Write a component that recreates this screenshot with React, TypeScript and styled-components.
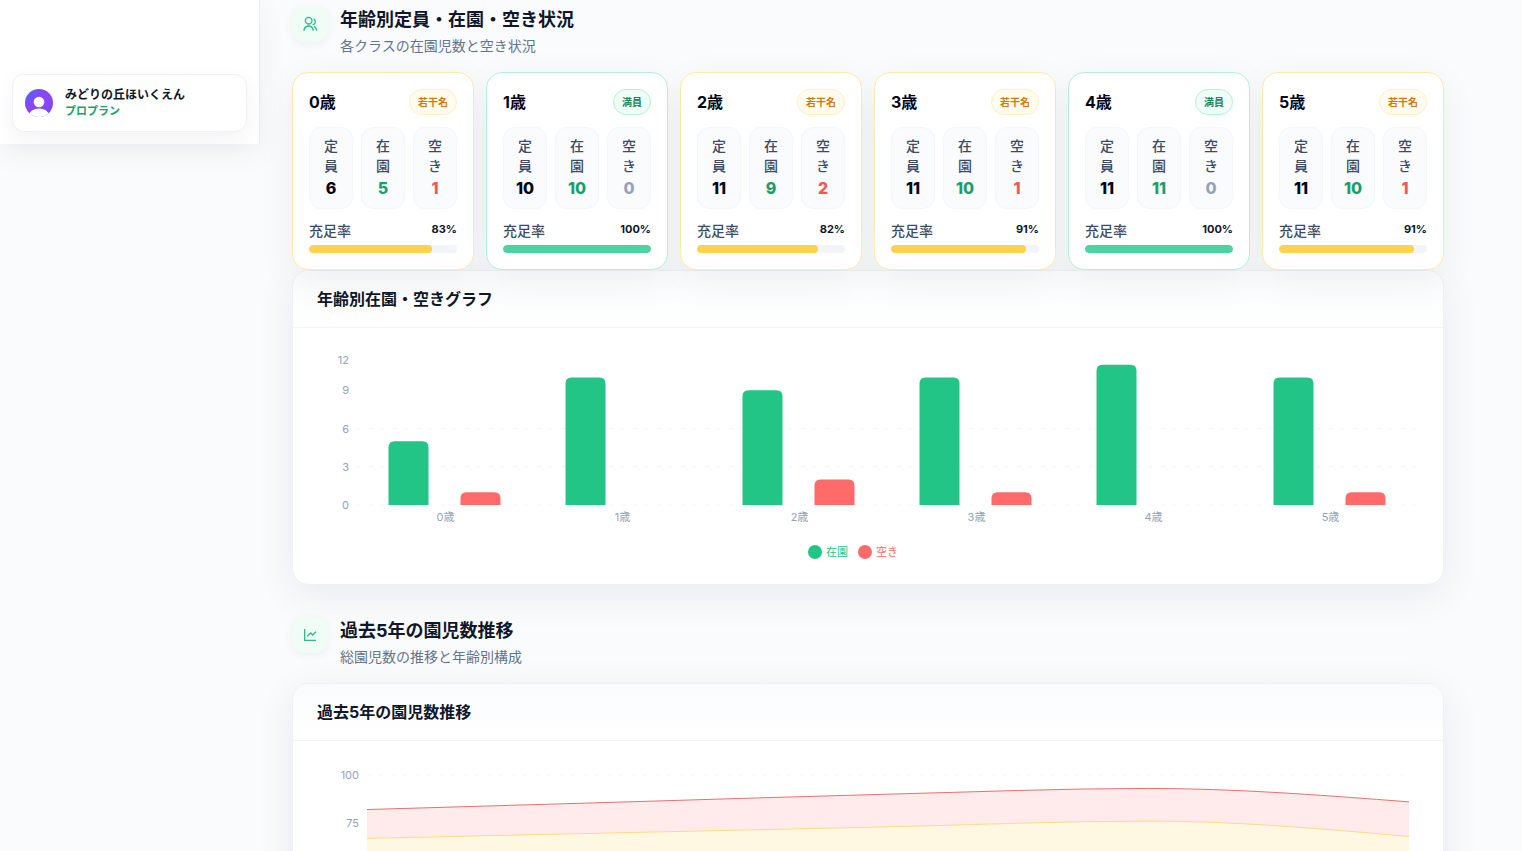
import React, { useLayoutEffect, useRef, useState } from "react";
import styled, { createGlobalStyle } from "styled-components";
import { RiGroupLine, RiLineChartLine } from "react-icons/ri";

const GlobalStyle = createGlobalStyle`
  * { box-sizing: border-box; }
  body {
    margin: 0;
    background: #f9fbfd;
    color: #0f172a;
    font-family: Inter, "Noto Sans CJK JP", sans-serif;
    font-size: 14px;
    line-height: 20px;
  }
  h2, h3, p, dl, dd, ul { margin: 0; padding: 0; }
`;

const Shell = styled.div`
  display: flex;
  align-items: flex-start;
  height: 100vh;
  overflow: hidden;
`;

const Sidebar = styled.aside`
  flex: 0 0 260px;
  padding: 74px 12px 12px;
  background: #ffffff;
  border-right: 1px solid #e9edf2;
  box-shadow: 0 8px 30px rgba(15, 23, 42, 0.05);
`;

const Account = styled.div`
  display: flex;
  align-items: center;
  gap: 12px;
  height: 58px;
  padding: 0 12px;
  background: #ffffff;
  border: 1px solid #eef1f5;
  border-radius: 12px;
  box-shadow: 0 8px 24px rgba(15, 23, 42, 0.05);
`;

const AccountName = styled.p`
  font-size: 12px;
  line-height: 16px;
  font-weight: 600;
`;

const AccountPlan = styled.p`
  font-size: 11px;
  line-height: 16px;
  font-weight: 700;
  color: #1a9f6c;
`;

const Main = styled.main`
  flex: 1;
  min-width: 0;
  padding: 6px 32px 32px;
`;

const Content = styled.div`
  display: flex;
  flex-direction: column;
  gap: 32px;
  max-width: 1152px;
`;

const SectionHeader = styled.header`
  display: flex;
  align-items: flex-start;
  gap: 12px;
  margin-bottom: 16px;
`;

const IconTile = styled.span`
  display: grid;
  place-items: center;
  width: 36px;
  height: 36px;
  border-radius: 12px;
  background: #effdf6;
  color: #2fbb84;
  font-size: 16px;
  box-shadow: 0 2px 10px rgba(15, 23, 42, 0.05);
`;

const SectionTitle = styled.h2`
  font-size: 18px;
  line-height: 27px;
  font-weight: 700;
`;

const SectionNote = styled.p`
  margin-top: 3px;
  color: #64748b;
`;

const CardGrid = styled.div`
  position: relative;
  isolation: isolate;
  display: grid;
  grid-template-columns: repeat(6, minmax(0, 1fr));
  gap: 12px;
`;

/* The shadow sits on a layer below all cards, so it never tints a neighbour. */
const AgeCard = styled.article<{ $full: boolean }>`
  position: relative;
  padding: 16px;
  background: #ffffff;
  border: 1px solid ${(p) => (p.$full ? "#b5f0d6" : "#fdeaa8")};
  border-radius: 16px;

  &::before {
    content: "";
    position: absolute;
    inset: 0;
    z-index: -1;
    border-radius: 16px;
    box-shadow: 0 10px 40px rgba(15, 23, 42, 0.06);
  }
`;

const AgeTop = styled.div`
  display: flex;
  align-items: center;
  justify-content: space-between;
  margin-bottom: 12px;
`;

const AgeName = styled.h3`
  font-size: 16px;
  line-height: 24px;
  font-weight: 700;
  color: #020617;
`;

const Badge = styled.span<{ $full: boolean }>`
  padding: 4px 8px;
  border: 1px solid ${(p) => (p.$full ? "#b5f0d6" : "#fdf0c4")};
  border-radius: 13px;
  background: ${(p) => (p.$full ? "#effdf6" : "#fffcef")};
  color: ${(p) => (p.$full ? "#17855c" : "#d17a10")};
  font-size: 10px;
  line-height: 16px;
  font-weight: 700;
`;

const Stats = styled.dl`
  display: grid;
  grid-template-columns: repeat(3, minmax(0, 1fr));
  gap: 8px;
  margin-bottom: 12px;
`;

const Stat = styled.div`
  padding: 8px;
  background: #fafbfd;
  border: 1px solid #f3f5f9;
  border-radius: 12px;
  text-align: center;
`;

const StatLabel = styled.dt`
  font-weight: 500;
  color: #3d4a5f;
`;

const StatValue = styled.dd<{ $color: string }>`
  font-size: 16px;
  line-height: 24px;
  font-weight: 800;
  color: ${(p) => p.$color};
`;

const RateRow = styled.div`
  display: flex;
  align-items: flex-start;
  justify-content: space-between;
  margin-bottom: 4px;
`;

const RateLabel = styled.span`
  font-weight: 500;
  color: #3d4a5f;
`;

const RateValue = styled.span`
  font-size: 11px;
  line-height: 16px;
  font-weight: 700;
`;

const Track = styled.div`
  height: 8px;
  border-radius: 4px;
  background: #f2f4f7;
  overflow: hidden;
`;

const Fill = styled.div<{ $full: boolean }>`
  height: 100%;
  border-radius: 4px;
  background: ${(p) => (p.$full ? "#4bd4a2" : "#fcd34d")};
`;

const Panel = styled.section`
  background: #ffffff;
  border: 1px solid #eef1f4;
  border-radius: 16px;
  box-shadow: 0 10px 40px rgba(15, 23, 42, 0.07);
`;

const PanelHead = styled.div`
  padding: 16px 24px;
  border-bottom: 1px solid #f3f5f8;
  border-radius: 16px 16px 0 0;
  background: linear-gradient(#fafbfd, #ffffff);
`;

const PanelTitle = styled.h3`
  font-size: 16px;
  line-height: 24px;
  font-weight: 700;
`;

const PanelBody = styled.div`
  padding: 24px;
`;

const Chart = styled.svg`
  display: block;
  width: 100%;
  overflow: visible;

  text {
    font-size: 11px;
    fill: #94a3b8;
  }
`;

const Legend = styled.ul`
  display: flex;
  justify-content: center;
  gap: 10px;
  padding-right: 30px;
  list-style: none;
`;

const LegendItem = styled.li<{ $color: string }>`
  display: flex;
  align-items: center;
  gap: 4px;
  font-size: 11px;
  line-height: 16px;
  color: ${(p) => p.$color};

  &::before {
    content: "";
    width: 14px;
    height: 14px;
    border-radius: 50%;
    background: ${(p) => p.$color};
  }
`;

const GREEN = "#22c585";
const RED = "#ff6b6b";

const ages = [
  { name: "0歳", capacity: 6, enrolled: 5, open: 1, rate: 83 },
  { name: "1歳", capacity: 10, enrolled: 10, open: 0, rate: 100 },
  { name: "2歳", capacity: 11, enrolled: 9, open: 2, rate: 82 },
  { name: "3歳", capacity: 11, enrolled: 10, open: 1, rate: 91 },
  { name: "4歳", capacity: 11, enrolled: 11, open: 0, rate: 100 },
  { name: "5歳", capacity: 11, enrolled: 10, open: 1, rate: 91 },
];

const layers = [
  { values: [82, 86, 90, 93, 86], stroke: "#e87070", fill: "#ffebeb" },
  { values: [67, 70, 73, 76, 68], stroke: "#fbdc84", fill: "#fef8e3" },
];

function useWidth<T extends Element>() {
  const ref = useRef<T>(null);
  const [width, setWidth] = useState(1102);
  useLayoutEffect(() => {
    const node = ref.current;
    if (!node) return;
    const read = () => setWidth(Math.round(node.getBoundingClientRect().width));
    read();
    const observer = new ResizeObserver(read);
    observer.observe(node);
    return () => observer.disconnect();
  }, []);
  return [ref, width] as const;
}

/** Bar with only its top corners rounded. */
function barPath(x: number, bottom: number, w: number, h: number, r = 6) {
  const top = bottom - h;
  return `M${x},${bottom}V${top + r}Q${x},${top} ${x + r},${top}H${x + w - r}Q${x + w},${top} ${x + w},${top + r}V${bottom}Z`;
}

/** Monotone cubic curve through evenly spaced points. */
function curvePath(points: [number, number][]) {
  const step = points[1][0] - points[0][0];
  const slopes = points.slice(1).map((p, i) => (p[1] - points[i][1]) / step);
  const inner = slopes.slice(1).map((s, i) => {
    const prev = slopes[i];
    if (prev * s <= 0) return 0;
    return Math.sign(s) * Math.min(Math.abs(prev), Math.abs(s), Math.abs(prev + s) / 4) * 2;
  });
  const first = (3 * slopes[0] - inner[0]) / 2;
  const last = (3 * slopes[slopes.length - 1] - inner[inner.length - 1]) / 2;
  const tangents = [first, ...inner, last];
  return points
    .map(([x, y], i) => {
      if (i === 0) return `M${x},${y}`;
      const [px, py] = points[i - 1];
      const third = step / 3;
      return `C${px + third},${py + tangents[i - 1] * third} ${x - third},${y - tangents[i] * third} ${x},${y}`;
    })
    .join("");
}

function Avatar() {
  return (
    <svg width="28" height="28" viewBox="0 0 28 28" aria-hidden="true">
      <defs>
        <linearGradient id="avatar" x1="0" y1="0" x2="1" y2="1">
          <stop offset="0" stopColor="#3f6bff" />
          <stop offset="0.4" stopColor="#8b45f7" />
          <stop offset="0.65" stopColor="#8b45f7" />
          <stop offset="1" stopColor="#5b50fb" />
        </linearGradient>
        <clipPath id="avatarClip">
          <circle cx="14" cy="14" r="14" />
        </clipPath>
      </defs>
      <g clipPath="url(#avatarClip)">
        <rect width="28" height="28" fill="url(#avatar)" />
        <circle cx="14" cy="13" r="5.3" fill="#fff" />
        <ellipse cx="14" cy="26.5" rx="10" ry="7" fill="#fff" />
      </g>
    </svg>
  );
}

function AgeSummary({ age }: { age: (typeof ages)[number] }) {
  const full = age.open === 0;
  return (
    <AgeCard $full={full}>
      <AgeTop>
        <AgeName>{age.name}</AgeName>
        <Badge $full={full}>{full ? "満員" : "若干名"}</Badge>
      </AgeTop>
      <Stats>
        <Stat>
          <StatLabel>定員</StatLabel>
          <StatValue $color="#020617">{age.capacity}</StatValue>
        </Stat>
        <Stat>
          <StatLabel>在園</StatLabel>
          <StatValue $color="#1a9f6c">{age.enrolled}</StatValue>
        </Stat>
        <Stat>
          <StatLabel>空き</StatLabel>
          <StatValue $color={full ? "#94a3b8" : "#f55656"}>{age.open}</StatValue>
        </Stat>
      </Stats>
      <RateRow>
        <RateLabel>充足率</RateLabel>
        <RateValue>{age.rate}%</RateValue>
      </RateRow>
      <Track>
        <Fill $full={full} style={{ width: `${age.rate}%` }} />
      </Track>
    </AgeCard>
  );
}

function BarChart() {
  const [ref, width] = useWidth<SVGSVGElement>();
  const left = 40;
  const base = 153;
  const unit = 12.75;
  const band = (width - left) / ages.length;
  return (
    <Chart ref={ref} height={192} role="img" aria-label="年齢別在園・空きグラフ">
      {[0, 3, 6].map((v) => (
        <line key={v} x1={left} x2={width} y1={base - v * unit} y2={base - v * unit} stroke="#f1f5f9" strokeDasharray="4 8" />
      ))}
      {[0, 3, 6, 9, 12].map((v) => (
        <text key={v} x={32} y={Math.max(base - v * unit, 8) + 4} textAnchor="end">
          {v}
        </text>
      ))}
      {ages.map((age, i) => {
        const center = left + band * (i + 0.5);
        return (
          <g key={age.name}>
            <path d={barPath(center - 57, base, 40, age.enrolled * unit)} fill={GREEN} />
            {age.open > 0 && <path d={barPath(center + 15, base, 40, age.open * unit)} fill={RED} />}
            <text x={center} y={169} textAnchor="middle">
              {age.name}
            </text>
          </g>
        );
      })}
    </Chart>
  );
}

function AreaChart() {
  const [ref, width] = useWidth<SVGSVGElement>();
  const left = 50;
  const right = width - 10;
  const y = (v: number) => 10 + (100 - v) * 1.92;
  return (
    <Chart ref={ref} height={240} role="img" aria-label="過去5年の園児数推移">
      <line x1={left} x2={right} y1={y(100)} y2={y(100)} stroke="#f1f5f9" strokeDasharray="4 8" />
      {[100, 75].map((v) => (
        <text key={v} x={42} y={y(v) + 4} textAnchor="end">
          {v}
        </text>
      ))}
      {layers.map((layer) => {
        const line = curvePath(
          layer.values.map((v, i): [number, number] => [left + ((right - left) * i) / 4, y(v)]),
        );
        return (
          <g key={layer.stroke}>
            <path d={`${line}V${y(0)}H${left}Z`} fill={layer.fill} />
            <path d={line} fill="none" stroke={layer.stroke} />
          </g>
        );
      })}
    </Chart>
  );
}

export default function App() {
  return (
    <>
      <GlobalStyle />
      <Shell>
        <Sidebar>
          <Account>
            <Avatar />
            <div>
              <AccountName>みどりの丘ほいくえん</AccountName>
              <AccountPlan>プロプラン</AccountPlan>
            </div>
          </Account>
        </Sidebar>
        <Main>
          <Content>
            <section>
              <SectionHeader>
                <IconTile>
                  <RiGroupLine />
                </IconTile>
                <div>
                  <SectionTitle>年齢別定員・在園・空き状況</SectionTitle>
                  <SectionNote>各クラスの在園児数と空き状況</SectionNote>
                </div>
              </SectionHeader>
              <CardGrid>
                {ages.map((age) => (
                  <AgeSummary key={age.name} age={age} />
                ))}
              </CardGrid>
              <Panel>
                <PanelHead>
                  <PanelTitle>年齢別在園・空きグラフ</PanelTitle>
                </PanelHead>
                <PanelBody>
                  <BarChart />
                  <Legend>
                    <LegendItem $color={GREEN}>在園</LegendItem>
                    <LegendItem $color={RED}>空き</LegendItem>
                  </Legend>
                </PanelBody>
              </Panel>
            </section>
            <section>
              <SectionHeader>
                <IconTile>
                  <RiLineChartLine />
                </IconTile>
                <div>
                  <SectionTitle>過去5年の園児数推移</SectionTitle>
                  <SectionNote>総園児数の推移と年齢別構成</SectionNote>
                </div>
              </SectionHeader>
              <Panel>
                <PanelHead>
                  <PanelTitle>過去5年の園児数推移</PanelTitle>
                </PanelHead>
                <PanelBody>
                  <AreaChart />
                </PanelBody>
              </Panel>
            </section>
          </Content>
        </Main>
      </Shell>
    </>
  );
}
